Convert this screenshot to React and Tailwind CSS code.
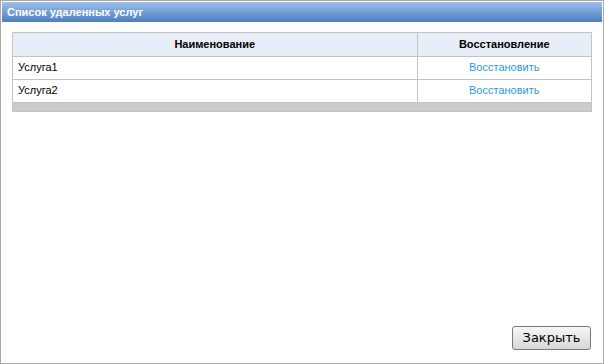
import React from 'react';

const rows = ['Услуга1', 'Услуга2'];

const App = () => {
  return (
    <div className="w-[604px] h-[364px] bg-white border border-[#a9a9a9] flex flex-col font-['Liberation_Sans',Arial,sans-serif]">
      {/* Title bar */}
      <div className="mx-px mt-px h-[20px] bg-gradient-to-b from-[#9dc0e8] to-[#4c7ec1] flex items-center px-[5px] text-white text-[11px] font-bold">
        Список удаленных услуг
      </div>

      {/* Table */}
      <div className="mx-[11px] mt-[10px] border border-[#c3c3c3]">
        <table className="w-full border-collapse text-[11px] text-black">
          <thead>
            <tr className="h-[23px] bg-[#e8eef7]">
              <th className="font-bold text-center border-b border-r border-[#c3c3c3]">Наименование</th>
              <th className="w-[174px] font-bold text-center border-b border-[#c3c3c3]">Восстановление</th>
            </tr>
          </thead>
          <tbody>
            {rows.map((name) => (
              <tr key={name} className="h-[23px]">
                <td className="px-[5px] text-left border-b border-r border-[#c3c3c3]">{name}</td>
                <td className="text-center border-b border-[#c3c3c3]">
                  <a href="#" className="text-[#2b9ad6]">Восстановить</a>
                </td>
              </tr>
            ))}
          </tbody>
        </table>
        <div className="h-[8px] bg-[#cccccc]" />
      </div>

      <div className="flex-1" />

      {/* Footer */}
      <div className="flex justify-end pr-[12px] pb-[13px]">
        <button className="w-[79px] h-[24px] rounded-[3px] border border-[#7a7a7a] bg-gradient-to-b from-[#f6f6f6] to-[#d8d8d8] text-[13px] text-black font-['DejaVu_Sans',Tahoma,sans-serif]">
          Закрыть
        </button>
      </div>
    </div>
  );
};

export default App;
